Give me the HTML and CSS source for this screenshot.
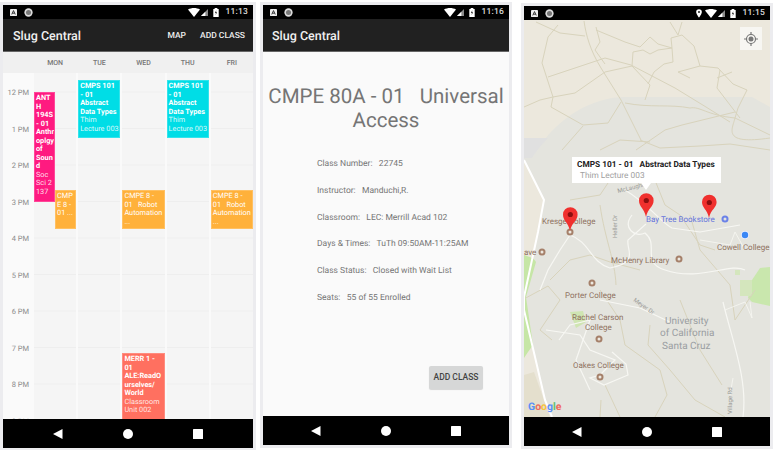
FILE: index.html
```html
<!doctype html>
<html>
<head>
<meta charset=utf-8>
<title>Slug Central</title>
<link rel="stylesheet" href="styles.css">
</head>

<body>

<svg class="defs" width="0" height="0">
  <symbol id="i-a" viewBox="0 0 8 8"><rect width="8" height="8" rx="1" fill="#eee"/><path d="M2 6.2 4 1.8 6 6.2M2.8 4.8H5.2" fill="none" stroke="#222" stroke-width="1"/></symbol>
  <symbol id="i-rec" viewBox="0 0 10 10"><circle cx="5" cy="5" r="4.6" fill="#ddd"/><circle cx="5" cy="5" r="2.8" fill="#777"/></symbol>
  <symbol id="i-wifi" viewBox="0 0 12 9"><path d="M0 1.5C3.500-.5 8.500-.5 12 1.500L6 9Z" fill="#fff"/></symbol>
  <symbol id="i-signal" viewBox="0 0 8 8"><path d="M8 0V8H0Z" fill="#8a8a8a"/><path d="M5 3.200V8H0Z" fill="#fff"/></symbol>
  <symbol id="i-bat" viewBox="0 0 6 10"><path d="M1.500 0H4.500V1H6V10H0V1H1.500Z" fill="#fff"/><path d="M3.300 2.500 1.800 5.500H2.900L2.600 7.800 4.200 4.600H3.100Z" fill="#222"/></symbol>
  <symbol id="i-pin" viewBox="0 0 7 10"><path d="M3.500 0A3.300 3.300 0 0 1 6.800 3.300C6.800 5.500 3.500 10 3.500 10S.2 5.500.2 3.300A3.300 3.300 0 0 1 3.500 0Z" fill="#fff"/><circle cx="3.500" cy="3.300" r="1.200" fill="#222"/></symbol>
  <symbol id="i-back" viewBox="0 0 10 10"><path d="M9.500 0V10L0 5Z" fill="#fff"/></symbol>
  <symbol id="i-home" viewBox="0 0 10 10"><circle cx="5" cy="5" r="5" fill="#fff"/></symbol>
  <symbol id="i-recent" viewBox="0 0 10 10"><rect width="10" height="10" rx=".6" fill="#fff"/></symbol>
</svg>

<main class="screens">

<!-- calendar -->
<section class="phone phone-cal">
  <div class="status">
    <svg class="ic-a"><use href="#i-a"/></svg>
    <svg class="ic-rec"><use href="#i-rec"/></svg>
    <span class="status-space"></span>
    <svg class="ic-wifi"><use href="#i-wifi"/></svg>
    <svg class="ic-signal"><use href="#i-signal"/></svg>
    <svg class="ic-bat"><use href="#i-bat"/></svg>
    <span class="clock">11:13</span>
  </div>
  <header class="appbar">
    <h1>Slug Central</h1>
    <nav class="actions"><span>MAP</span><span>ADD CLASS</span></nav>
  </header>
  <div class="day-names">
    <span></span><span>MON</span><span>TUE</span><span>WED</span><span>THU</span><span>FRI</span>
  </div>
  <div class="week">
    <div class="hours">
      <span>12 PM</span><span>1 PM</span><span>2 PM</span><span>3 PM</span><span>4 PM</span><span>5 PM</span><span>6 PM</span><span>7 PM</span><span>8 PM</span><span>9 PM</span>
    </div>
    <div class="day">
      <div class="event pink half ev-anth"><b>ANT<br>H<br>194S<br>- 01<br>Anthr<br>oplgy<br>of<br>Soun<br>d</b> Soc<br>Sci 2<br>137</div>
      <div class="event orange half right ev-cmpe">CMP<br>E 8 -<br>01 ...</div>
    </div>
    <div class="day">
      <div class="event cyan ev-cmps"><b>CMPS 101 - 01 Abstract Data Types</b> Thim Lecture&nbsp;003</div>
    </div>
    <div class="day">
      <div class="event orange ev-cmpe">CMPE 8 - 01&nbsp;&nbsp; Robot Automation<br>...</div>
      <div class="event coral ev-merr"><b>MERR 1 - 01 ALE:ReadOurselves/ World</b> Classroom Unit&nbsp;002</div>
    </div>
    <div class="day">
      <div class="event cyan ev-cmps"><b>CMPS 101 - 01 Abstract Data Types</b> Thim Lecture&nbsp;003</div>
    </div>
    <div class="day">
      <div class="event orange ev-cmpe">CMPE 8 - 01&nbsp;&nbsp; Robot Automation<br>...</div>
    </div>
  </div>
  <div class="navbar">
    <svg><use href="#i-back"/></svg><svg><use href="#i-home"/></svg><svg><use href="#i-recent"/></svg>
  </div>
</section>

<!-- class details -->
<section class="phone phone-detail">
  <div class="status">
    <svg class="ic-a"><use href="#i-a"/></svg>
    <svg class="ic-rec"><use href="#i-rec"/></svg>
    <span class="status-space"></span>
    <svg class="ic-wifi"><use href="#i-wifi"/></svg>
    <svg class="ic-signal"><use href="#i-signal"/></svg>
    <svg class="ic-bat"><use href="#i-bat"/></svg>
    <span class="clock">11:16</span>
  </div>
  <header class="appbar">
    <h1>Slug Central</h1>
  </header>
  <div class="detail">
    <h2>CMPE 80A - 01&nbsp;&nbsp; Universal Access</h2>
    <ul class="facts">
      <li>Class Number: &nbsp; 22745</li>
      <li>Instructor: &nbsp; Manduchi,R.</li>
      <li>Classroom: &nbsp; LEC: Merrill Acad 102</li>
      <li>Days &amp; Times: &nbsp; TuTh 09:50AM-11:25AM</li>
      <li>Class Status: &nbsp; Closed with Wait List</li>
      <li>Seats: &nbsp; 55 of 55 Enrolled</li>
    </ul>
    <div class="detail-foot"><button class="add-btn">ADD CLASS</button></div>
  </div>
  <div class="navbar">
    <svg><use href="#i-back"/></svg><svg><use href="#i-home"/></svg><svg><use href="#i-recent"/></svg>
  </div>
</section>

<!-- map -->
<section class="phone phone-map">
  <div class="status">
    <svg class="ic-a"><use href="#i-a"/></svg>
    <svg class="ic-rec"><use href="#i-rec"/></svg>
    <span class="status-space"></span>
    <svg class="ic-pin"><use href="#i-pin"/></svg>
    <svg class="ic-wifi"><use href="#i-wifi"/></svg>
    <svg class="ic-signal"><use href="#i-signal"/></svg>
    <svg class="ic-bat"><use href="#i-bat"/></svg>
    <span class="clock">11:15</span>
  </div>
  <div class="map">
    <svg class="map-art" viewBox="524 20 246 397" width="246" height="397">
      <rect x="524" y="20" width="246" height="397" fill="#ece8dd"/>
      <!-- campus area -->
      <path d="M524 138H546C560 120 590 97 625 97H752L770 107V417H524Z" fill="#e4e4de"/>
      <path d="M524 138H548C540 146 536 152 532 158L524 158Z" fill="#e0e0e0"/>
      <path d="M524 160 544 200 538 232 524 297V310L535 357 545 400 552 417H524Z" fill="#ece8dd"/>
      <path d="M524 255C530 257 534 258 536 262L526 297 533 345 528 352 524 358Z" fill="#c6e6a6"/>
      <path d="M524 375 534 372 544 400 550 417H524Z" fill="#e4dfcd"/>
      <path d="M770 267V306L752 302 748 298 752 280 760 268Z" fill="#c9e7ad"/>
      <path d="M740 280H752V296H740Z M735 270H740V275H735Z" fill="#d4e6bd"/>
      <path d="M570 312 583 311 586 322 576 328Z" fill="#cfe5b2"/>

      <!-- tan roads top -->
      <g class="road-tan">
        <path d="M584 21C586 35 590 50 601 68L621 100 641 140"/>
        <path d="M596 27 600 42 595 50 605 64"/>
        <path d="M548 77 605 58 631 65 675 88 706 107 730 122"/>
        <path d="M558 25 548 37 542 63 553 97 551 107 583 125 608 123 621 102"/>
        <path d="M536 22 560 33 585 36"/>
        <path d="M553 97 575 93 605 72 632 66 650 85 645 100"/>
        <path d="M632 66 633 52 643 50 650 54 658 50 672 48 673 62 664 64 654 72 648 84"/>
        <path d="M596 30 625 42 640 47 650 37 658 44 672 48 671 38 682 35 694 46 700 66 678 72 690 78"/>
        <path d="M670 22 678 35 682 22 M700 66 718 68 733 84 747 90 738 108 735 118 770 135"/>
        <path d="M625 103C650 108 670 104 690 108 700 106 706 115 735 118 732 130 722 145 770 138"/>
        <path d="M720 70 717 88 740 118"/>
        <path d="M717 78 732 72"/>
        <path d="M636 150 665 130 682 125 735 112"/>
        <path d="M562 150 583 126 M600 150 620 140 650 142"/>
        <path d="M524 107 540 100 553 97"/>
        <path d="M640 140 660 148 700 146 730 144 770 150"/>
      </g>

      <!-- white & tan lower roads -->
      <g class="road-tan">
        <path d="M570 200 600 195 610 180 625 175 640 172"/>
        <path d="M600 205C605 240 615 260 616 285"/>
        <path d="M650 168 665 205 680 215 700 245 715 250"/>
        <path d="M550 280 570 260 590 255 610 262 640 270"/>
        <path d="M522 300 548 286 560 300 540 330 552 340"/>
        <path d="M600 290 620 320 625 345 660 370 667 395 655 417"/>
        <path d="M650 325 648 345 670 370 695 400 725 417"/>
        <path d="M680 300 700 350 722 385"/>
        <path d="M601 400 600 417 M605 385 620 417"/>
        <path d="M690 215 700 250 730 285 735 320 755 290"/>
      </g>
      <g class="road-white">
        <path d="M625 190C650 205 660 222 672 228L700 232 740 225"/>
        <path d="M632 215C622 228 635 238 645 233 660 245 640 262 665 270 700 282 730 262 745 270"/>
        <path d="M570 235C590 242 590 262 610 268 640 262 626 250 628 240L646 224"/>
        <path d="M600 300 640 308 670 322"/>
        <path d="M570 235 560 250 548 270 540 290"/>
        <path d="M559 340 570 325 590 320 576 360 590 390"/>
        <path d="M546 330 580 335 590 350 615 360 600 375 590 378 604 385 628 375 626 364 612 352"/>
        <path d="M723 302C732 340 748 380 743 417"/>
      </g>
      <path class="road-highway" d="M524 160 544 200 538 232 524 297V310L535 357 545 400 552 417"/>

      <g class="road-thin">
        <path d="M700 240 730 245 735 232 745 250"/>
        <path d="M725 310 745 302 752 318 750 302 M730 395 733 378"/>
      </g>

      <!-- labels -->
      <text class="lbl-poi" x="542" y="224">Kresge College</text>
      <text class="lbl-blue" x="646" y="222">Bay Tree Bookstore</text>
      <text class="lbl-poi" x="717" y="250">Cowell College</text>
      <text class="lbl-poi" x="611" y="263">McHenry Library</text>
      <text class="lbl-poi" x="565" y="298">Porter College</text>
      <text class="lbl-poi" x="572" y="320">Rachel Carson</text>
      <text class="lbl-poi" x="585" y="330">College</text>
      <text class="lbl-poi" x="573" y="368">Oakes College</text>
      <text class="lbl-poi" x="524" y="255">ave</text>
      <text class="lbl-uni" x="665" y="324">University</text>
      <text class="lbl-uni" x="660" y="336">of California</text>
      <text class="lbl-uni" x="662" y="349">Santa Cruz</text>
      <text class="lbl-road" transform="translate(617 238) rotate(-90)">Heller Dr</text>
      <text class="lbl-road" transform="translate(618 193) rotate(-14)">McLaughlin</text>
      <text class="lbl-road" transform="translate(633 301) rotate(35)">Meyer Dr</text>
      <text class="lbl-road" transform="translate(732 414) rotate(-90)">Village Rd</text>
      <text class="lbl-logo" x="528" y="410"><tspan fill="#5b8ff5">G</tspan><tspan fill="#ef6a5e">o</tspan><tspan fill="#f6c33e">o</tspan><tspan fill="#5b8ff5">g</tspan><tspan fill="#5fc06f">l</tspan><tspan fill="#ef6a5e">e</tspan></text>

      <!-- poi dots -->
      <g class="poi">
        <circle cx="570" cy="232" r="3.500"/><circle cx="542" cy="252" r="3.500"/>
        <circle cx="679" cy="259" r="3.500"/><circle cx="592" cy="283" r="3.500"/>
        <circle cx="599" cy="339" r="3.500"/><circle cx="600" cy="377" r="3.500"/>
      </g>
      <g class="poi-in">
        <circle cx="570" cy="232" r="1.500"/><circle cx="542" cy="252" r="1.500"/>
        <circle cx="679" cy="259" r="1.500"/><circle cx="592" cy="283" r="1.500"/>
        <circle cx="599" cy="339" r="1.500"/><circle cx="600" cy="377" r="1.500"/>
      </g>
      <circle cx="725" cy="219" r="3.500" fill="#6b82e8"/><circle cx="725" cy="219" r="1.500" fill="#e4e4de"/>
      <circle cx="745" cy="235" r="4" fill="#eef"/><circle cx="745" cy="235" r="3.200" fill="#3b87f5"/>

      <!-- markers -->
      <path class="pin" d="M646 217C644 208 639 207 639 200.500A7.300 7.300 0 0 1 653.600 200.500C653.600 207 648 208 646 217Z"/>
      <circle class="pin-dot" cx="646.300" cy="200.500" r="2.600"/>
      <path class="pin" d="M709 218C707 209 702 208 702 202A7.300 7.300 0 0 1 716.600 202C716.600 208 711 209 709 218Z"/>
      <circle class="pin-dot" cx="709.300" cy="202.500" r="2.600"/>
      <path class="pin" d="M570 231C568 222 563 221 563 214.500A7.300 7.300 0 0 1 577.600 214.500C577.600 221 572 222 570 231Z"/>
      <circle class="pin-dot" cx="570.300" cy="214.500" r="2.600"/>
    </svg>

    <button class="locate">
      <svg width="14" height="14" viewBox="0 0 14 14"><circle cx="7" cy="7" r="4.500" fill="none" stroke="#777" stroke-width="1.200"/><circle cx="7" cy="7" r="2.500" fill="#777"/><path d="M7 0V3M7 11V14M0 7H3M11 7H14" stroke="#777" stroke-width="1.200"/></svg>
    </button>
    <div class="bubble">
      <strong>CMPS 101 - 01 &nbsp; Abstract Data Types</strong>
      <span>Thim Lecture 003</span>
    </div>
  </div>
  <div class="navbar">
    <svg><use href="#i-back"/></svg><svg><use href="#i-home"/></svg><svg><use href="#i-recent"/></svg>
  </div>
</section>

</main>
</body>
</html>
```

FILE: styles.css
```css
* {
  box-sizing: border-box;
}

body {
  margin: 0;
  width: 776px;
  height: 450px;
  overflow: hidden;
  background: #fff;
  font-family: Roboto, "Liberation Sans", sans-serif;
  text-rendering: geometricPrecision;
}

.defs {
  position: absolute;
}

.screens {
  display: flex;
  align-items: flex-start;
  padding: 5px 0 0 3px;
}

.phone {
  display: flex;
  flex-direction: column;
  width: 246px;
  overflow: hidden;
  background: #fafafa;
  outline: 3px solid #ececef;
}

.phone-cal {
  width: 250px;
  height: 443px;
}

.phone-detail {
  height: 440px;
  margin-left: 10px;
}

.phone-map {
  height: 440px;
  margin-top: 1px;
  margin-left: 15px;
}

/* status bar */
.status {
  flex: none;
  display: flex;
  align-items: center;
  height: 14px;
  padding: 0 5px 0 7px;
  background: #000;
}

.status-space {
  flex: 1;
}

.ic-a {
  width: 7px;
  height: 7px;
}

.ic-rec {
  width: 9px;
  height: 9px;
  margin-left: 7px;
}

.ic-pin {
  width: 6px;
  height: 9px;
  margin-right: 3px;
}

.ic-wifi {
  width: 12px;
  height: 9px;
}

.ic-signal {
  width: 7px;
  height: 7px;
  margin: 1px 0 0 1px;
}

.ic-bat {
  width: 6px;
  height: 9px;
  margin-left: 5px;
}

.clock {
  margin-left: 6px;
  font-size: 8.500px;
  font-weight: 500;
  letter-spacing: .2px;
  color: #ddd;
}

/* app bar */
.appbar {
  flex: none;
  display: flex;
  align-items: center;
  justify-content: space-between;
  height: 33px;
  padding: 2px 8px 0 10px;
  background: #212121;
  border-bottom: 1px solid #666;
}

.appbar h1 {
  margin: 0;
  font-size: 12.500px;
  font-weight: 500;
  color: #f0f0f0;
}

.phone-detail .appbar {
  padding-left: 9px;
}

.actions {
  display: flex;
  gap: 14px;
  font-size: 8.500px;
  font-weight: 500;
  color: #f0f0f0;
}

/* calendar */
.day-names {
  flex: none;
  display: grid;
  grid-template-columns: 29px repeat(5, 1fr);
  column-gap: 2px;
  align-items: center;
  height: 21px;
  padding-top: 1px;
  background: #f0f0f0;
  font-size: 7px;
  font-weight: 500;
  text-align: center;
  color: #777;
}

.week {
  flex: 1;
  min-height: 0;
  display: grid;
  grid-template-columns: 29px repeat(5, 1fr);
  column-gap: 2px;
  overflow: hidden;
  background: #fafafa;
}

.hours {
  display: flex;
  flex-direction: column;
  padding-top: 1px;
  font-size: 7.500px;
  color: #8c8c8c;
}

.hours span {
  flex: none;
  height: 36.500px;
  padding: 14px 3px 0 0;
  text-align: right;
}

.day {
  position: relative;
  background-color: #f5f5f5;
  background-image: linear-gradient(#eeeeee 1px, transparent 1px);
  background-size: 100% 36.500px;
  background-position: 0 18.500px;
}

.event {
  position: absolute;
  left: 0;
  right: 0;
  padding: 1px 0 0 1px;
  overflow: hidden;
  font-size: 7.300px;
  line-height: 8.500px;
  overflow-wrap: anywhere;
  color: rgba(255, 255, 255, .85);
  border: 1px solid rgba(255, 255, 255, .2);
}

.event b {
  display: block;
  font-weight: 700;
  color: #fff;
}

.half {
  right: 50%;
  white-space: nowrap;
}

.half.right {
  left: 50%;
  right: 0;
}

.pink {
  background: #ff1a80;
}

.cyan {
  background: #00dde6;
}

.orange {
  background: #ffb13b;
  color: #fff;
}

.coral {
  background: #ff7060;
}

.ev-anth {
  top: 19px;
  height: 110px;
}

.ev-cmpe {
  top: 117px;
  height: 39px;
}

.ev-cmps {
  top: 7px;
  height: 58px;
}

.ev-merr {
  top: 280px;
  height: 90px;
}

/* navigation bar */
.navbar {
  flex: none;
  display: flex;
  align-items: center;
  justify-content: center;
  gap: 60px;
  height: 29px;
  background: #000;
}

.navbar svg {
  width: 10px;
  height: 10px;
}

/* class details */
.detail {
  flex: 1;
  min-height: 0;
  display: flex;
  flex-direction: column;
  padding-top: 33px;
}

.detail h2 {
  margin: 0;
  font-size: 20.500px;
  font-weight: 400;
  line-height: 24px;
  text-align: center;
  color: #757575;
}

.facts {
  list-style: none;
  margin: 25px 0 0;
  padding: 0 0 0 54px;
  font-size: 8.500px;
  color: #757575;
}

.facts li {
  height: 26.800px;
  line-height: 12px;
}

.detail-foot {
  display: flex;
  justify-content: flex-end;
  margin-top: 47px;
  padding-right: 26px;
}

.add-btn {
  width: 54px;
  height: 23px;
  padding: 0;
  border: 0;
  border-radius: 2px;
  background: #d6d7d7;
  box-shadow: 0 1px 1px rgba(0, 0, 0, .15);
  font-family: inherit;
  font-size: 8.500px;
  font-weight: 500;
  color: #444;
}

/* map */
.map {
  position: relative;
  flex: 1;
  min-height: 0;
  overflow: hidden;
}

.map-art {
  display: block;
}

.road-tan path {
  fill: none;
  stroke: #d8d3bc;
  stroke-width: 1;
}

.road-white path {
  fill: none;
  stroke: #f7f7f3;
  stroke-width: 1.200;
}

.road-thin path {
  fill: none;
  stroke: #f7f7f3;
  stroke-width: .8;
}

.road-highway {
  fill: none;
  stroke: #fff;
  stroke-width: 2;
}

.lbl-poi {
  font-size: 8px;
  fill: #8f725f;
}

.lbl-blue {
  font-size: 8px;
  fill: #6474dc;
}

.lbl-uni {
  font-size: 10px;
  fill: #9a9ea2;
}

.lbl-road {
  font-size: 6px;
  fill: #9a9a96;
}

.lbl-logo {
  font-size: 10.500px;
  font-weight: 700;
}

.poi {
  fill: #a5806a;
}

.poi-in {
  fill: #ece8e0;
}

.pin {
  fill: #f0302e;
}

.pin-dot {
  fill: #8c0f0f;
}

.locate {
  position: absolute;
  top: 7px;
  right: 8px;
  display: flex;
  align-items: center;
  justify-content: center;
  width: 22px;
  height: 23px;
  padding: 0;
  border: 0;
  background: #f7f6f2;
}

.bubble {
  position: absolute;
  top: 137px;
  left: 48px;
  display: flex;
  flex-direction: column;
  width: 149px;
  height: 26px;
  padding: 3px 0 0 5px;
  background: #fff;
  font-size: 8.300px;
  line-height: 11px;
}

.bubble::after {
  content: "";
  position: absolute;
  left: 69px;
  bottom: -7px;
  border-top: 7px solid #fff;
  border-left: 5px solid transparent;
  border-right: 5px solid transparent;
}

.bubble strong {
  font-weight: 700;
  color: #222;
}

.bubble span {
  padding-left: 3px;
  color: #a0a0a0;
}
```
